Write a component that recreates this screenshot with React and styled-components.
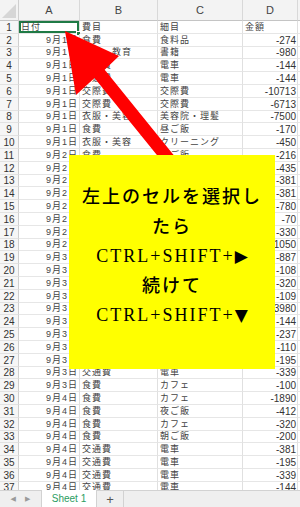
import React from 'react'
import styled, { createGlobalStyle } from 'styled-components'

const GlobalStyle = createGlobalStyle`
html, body {
  margin: 0;
  padding: 0;
}
body {
  width: 300px;
  height: 507px;
  overflow: hidden;
  background: #fff;
}`

const Page = styled.div`
position: relative;
width: 300px;
height: 507px;
display: flex;
flex-direction: column;
overflow: hidden;
font-family: "Liberation Sans", "Noto Sans CJK JP", sans-serif;
color: #333;`

const Sheet = styled.div`
flex: 1;
min-height: 0;
display: grid;
grid-template-columns: 19px 61px 78px 85px 55px 1fr;
grid-template-rows: 21px;
grid-auto-rows: 12.8px;
align-content: start;
overflow: hidden;`

const Corner = styled.div`
position: relative;
background: #f3f3f3;
border-right: 1px solid #cfcfcf;
border-bottom: 1px solid #c4c4c4;
box-sizing: border-box;

&::after {
  content: '';
  position: absolute;
  right: 2px;
  bottom: 2px;
  border-style: solid;
  border-width: 0 0 14px 14px;
  border-color: transparent transparent #d6d6d6 transparent;
}`

const ColHead = styled.div`
display: flex;
align-items: center;
justify-content: center;
background: #f3f3f3;
border-right: 1px solid #d8d8d8;
border-bottom: 1px solid #c4c4c4;
box-sizing: border-box;
font-size: 11px;
color: #444;`

const RowNum = styled.div`
display: flex;
align-items: flex-end;
justify-content: center;
background: #f6f6f6;
border-right: 1px solid #cfcfcf;
border-bottom: 1px solid #e2e2e2;
box-sizing: border-box;
font-size: 10px;
line-height: 11px;
color: #333;`

const Cell = styled.div`
position: relative;
display: flex;
align-items: flex-end;
justify-content: ${props => props.$right ? 'flex-end' : 'flex-start'};
padding: 0 ${props => props.$right ? '1px' : '0'} 0 ${props => props.$right ? '0' : '2px'};
border-right: 1px solid #e0e0e0;
border-bottom: 1px solid #e6e6e6;
box-sizing: border-box;
white-space: nowrap;
font-size: ${props => props.$num ? '10px' : '9px'};
letter-spacing: ${props => props.$num ? '0' : '1px'};
line-height: 11px;
color: ${props => props.$num ? '#333' : '#444'};
box-shadow: ${props => props.$selected ? 'inset 0 0 0 2px #1f7a45' : 'none'};
overflow: ${props => props.$selected ? 'visible' : 'hidden'};`

const Handle = styled.span`
position: absolute;
right: -2px;
bottom: -3px;
width: 5px;
height: 5px;
background: #1f7a45;
border: 1px solid #fff;
box-sizing: border-box;`

const Filler = styled.div`
border-bottom: 1px solid ${props => props.$head ? '#c4c4c4' : '#e6e6e6'};
background: ${props => props.$head ? '#f3f3f3' : '#fff'};
box-sizing: border-box;`

const TabBar = styled.div`
flex: none;
height: 17px;
display: flex;
align-items: stretch;
background: #efefef;
border-top: 1px solid #d2d2d2;
box-sizing: border-box;
line-height: 1;`

const Nav = styled.div`
width: 41px;
display: flex;
align-items: center;
justify-content: center;
gap: 9px;
color: #9a9a9a;
font-family: "DejaVu Sans", sans-serif;
font-size: 7px;`

const Tab = styled.div`
width: 56px;
margin-top: -1px;
display: flex;
align-items: center;
justify-content: center;
background: #fff;
border-left: 1px solid #d2d2d2;
border-right: 1px solid #d2d2d2;
box-sizing: border-box;
font-size: 10px;
color: #2a9d62;`

const AddTab = styled.div`
width: 26px;
display: flex;
align-items: center;
justify-content: center;
border-right: 1px solid #d2d2d2;
font-size: 13px;
color: #555;`

const Arrow = styled.svg`
position: absolute;
left: 0;
top: 0;
pointer-events: none;`

const Callout = styled.div`
position: absolute;
left: 69px;
top: 155px;
width: 206px;
height: 214px;
padding-top: 28px;
box-sizing: border-box;
background: #ffff00;
text-align: center;
font-family: "Liberation Serif", "Noto Sans CJK JP", serif;
font-size: 18px;
font-weight: 500;
letter-spacing: 2px;
line-height: 29.6px;
color: #000;`

const Line = styled.div`
white-space: nowrap;`

const Glyph = styled.span`
font-family: "DejaVu Sans", sans-serif;
font-size: 17px;
letter-spacing: 0;`

const rows = [
  ['9月1日', '食費', '食料品', '-274'],
  ['9月1日', '教養・教育', '書籍', '-980'],
  ['9月1日', '交通費', '電車', '-144'],
  ['9月1日', '交通費', '電車', '-144'],
  ['9月1日', '交際費', '交際費', '-10713'],
  ['9月1日', '交際費', '交際費', '-6713'],
  ['9月1日', '衣服・美容', '美容院・理髪', '-7500'],
  ['9月1日', '食費', '昼ご飯', '-170'],
  ['9月1日', '衣服・美容', 'クリーニング', '-450'],
  ['9月2日', '食費', '夜ご飯', '-216'],
  ['9月2日', '食費', 'カフェ', '-435'],
  ['9月2日', '交通費', '電車', '-381'],
  ['9月2日', '交通費', '電車', '-381'],
  ['9月2日', '食費', '昼ご飯', '-780'],
  ['9月2日', '食費', 'カフェ', '-70'],
  ['9月2日', '食費', '食料品', '-330'],
  ['9月2日', '日用品', '消耗品', '-1050'],
  ['9月3日', '食費', '食料品', '-887'],
  ['9月3日', '食費', '朝ご飯', '-108'],
  ['9月3日', '食費', 'カフェ', '-320'],
  ['9月3日', '食費', '昼ご飯', '-109'],
  ['9月3日', '日用品', '消耗品', '-3980'],
  ['9月3日', '交通費', '電車', '-144'],
  ['9月3日', '食費', 'カフェ', '-237'],
  ['9月3日', '食費', '朝ご飯', '-110'],
  ['9月3日', '交通費', '電車', '-195'],
  ['9月3日', '交通費', '電車', '-339'],
  ['9月3日', '食費', 'カフェ', '-100'],
  ['9月4日', '食費', 'カフェ', '-1890'],
  ['9月4日', '食費', '夜ご飯', '-412'],
  ['9月4日', '食費', 'カフェ', '-320'],
  ['9月4日', '食費', '朝ご飯', '-200'],
  ['9月4日', '交通費', '電車', '-381'],
  ['9月4日', '交通費', '電車', '-195'],
  ['9月4日', '交通費', '電車', '-339'],
  ['9月4日', '交通費', '電車', '-144'],
]

const App = () => {
  return (
    <Page>
      <GlobalStyle />
      <Sheet>
        <Corner />
        {['A', 'B', 'C', 'D'].map(c => <ColHead key={c}>{c}</ColHead>)}
        <Filler $head />

        <RowNum>1</RowNum>
        <Cell $selected>日付<Handle /></Cell>
        <Cell>費目</Cell>
        <Cell>細目</Cell>
        <Cell>金額</Cell>
        <Filler />

        {rows.map((r, i) => (
          <React.Fragment key={i}>
            <RowNum>{i + 2}</RowNum>
            <Cell $right>{r[0]}</Cell>
            <Cell>{r[1]}</Cell>
            <Cell>{r[2]}</Cell>
            <Cell $right $num>{r[3]}</Cell>
            <Filler />
          </React.Fragment>
        ))}
      </Sheet>

      <TabBar>
        <Nav><span>◀</span><span>▶</span></Nav>
        <Tab>Sheet 1</Tab>
        <AddTab>+</AddTab>
      </TabBar>

      <Arrow width="300" height="507" viewBox="0 0 300 507">
        <polygon
          fill="#ff0000"
          points="65,31 119,56 104.7,69.7 183.3,166.9 173.1,175.1 94.5,77.9 76,95"
        />
      </Arrow>

      <Callout>
        <Line>左上のセルを選択し</Line>
        <Line>たら</Line>
        <Line>CTRL+SHIFT+<Glyph>▶</Glyph></Line>
        <Line>続けて</Line>
        <Line>CTRL+SHIFT+<Glyph>▼</Glyph></Line>
      </Callout>
    </Page>
  )
}

export default App
